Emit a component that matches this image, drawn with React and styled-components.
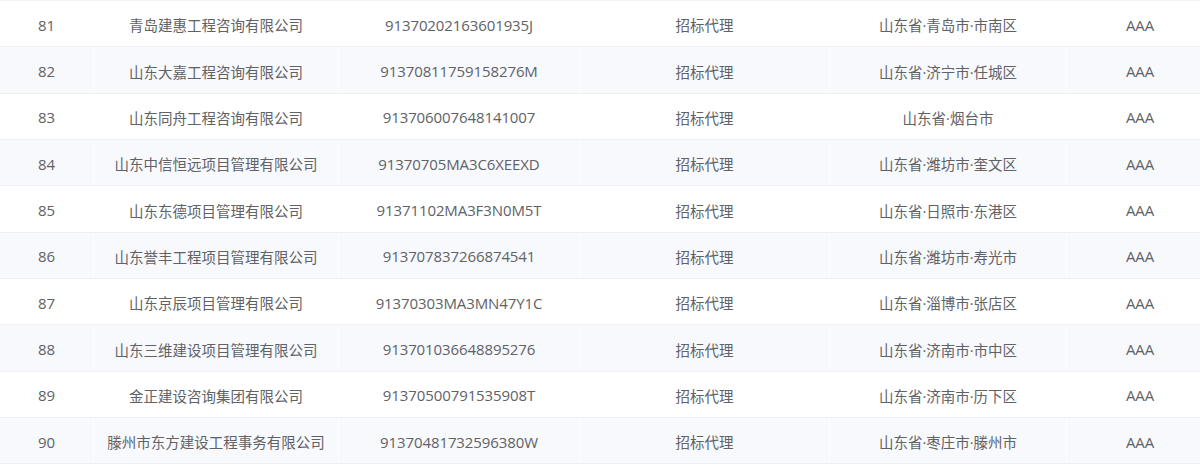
import React from "react";
import styled, { createGlobalStyle } from "styled-components";

const GlobalStyle = createGlobalStyle`
  body {
    margin: 0;
    background: #ffffff;
    font-family: "Open Sans", "Noto Sans CJK SC", sans-serif;
  }
`;

const TableWrap = styled.div`
  width: 1200px;
  height: 467px;
  overflow: hidden;
  background: #ffffff;
`;

const Table = styled.div`
  width: 1214px;
  border-top: 1px solid #f0f2f6;
`;

const Row = styled.div`
  display: grid;
  grid-template-columns: 94px 245px 241px 250px 237px 147px;
  height: 46.35px;
  box-sizing: border-box;
  border-bottom: 1px solid #eef0f5;
  background: ${(p) => (p.$striped ? "#f8f9fd" : "#ffffff")};
`;

const Cell = styled.div`
  display: flex;
  align-items: center;
  justify-content: center;
  font-size: ${(p) => (p.$latin ? "15px" : "14.5px")};
  letter-spacing: ${(p) => (p.$latin ? "-0.1px" : "0")};
  color: #606266;
  white-space: nowrap;
  border-right: 1px solid ${(p) => (p.$striped ? "#fdfdff" : "#ffffff")};
  padding-top: 2px;
`;

const latinCols = [true, false, true, false, false, true];

const rows = [
  ["81", "青岛建惠工程咨询有限公司", "91370202163601935J", "招标代理", "山东省·青岛市·市南区", "AAA"],
  ["82", "山东大嘉工程咨询有限公司", "91370811759158276M", "招标代理", "山东省·济宁市·任城区", "AAA"],
  ["83", "山东同舟工程咨询有限公司", "913706007648141007", "招标代理", "山东省·烟台市", "AAA"],
  ["84", "山东中信恒远项目管理有限公司", "91370705MA3C6XEEXD", "招标代理", "山东省·潍坊市·奎文区", "AAA"],
  ["85", "山东东德项目管理有限公司", "91371102MA3F3N0M5T", "招标代理", "山东省·日照市·东港区", "AAA"],
  ["86", "山东誉丰工程项目管理有限公司", "913707837266874541", "招标代理", "山东省·潍坊市·寿光市", "AAA"],
  ["87", "山东京辰项目管理有限公司", "91370303MA3MN47Y1C", "招标代理", "山东省·淄博市·张店区", "AAA"],
  ["88", "山东三维建设项目管理有限公司", "913701036648895276", "招标代理", "山东省·济南市·市中区", "AAA"],
  ["89", "金正建设咨询集团有限公司", "91370500791535908T", "招标代理", "山东省·济南市·历下区", "AAA"],
  ["90", "滕州市东方建设工程事务有限公司", "91370481732596380W", "招标代理", "山东省·枣庄市·滕州市", "AAA"],
];

export default function App() {
  return (
    <>
      <GlobalStyle />
      <TableWrap>
        <Table>
          {rows.map((r, i) => (
            <Row key={r[0]} $striped={i % 2 === 1}>
              {r.map((c, j) => (
                <Cell key={j} $striped={i % 2 === 1} $latin={latinCols[j]}>
                  {c}
                </Cell>
              ))}
            </Row>
          ))}
        </Table>
      </TableWrap>
    </>
  );
}
